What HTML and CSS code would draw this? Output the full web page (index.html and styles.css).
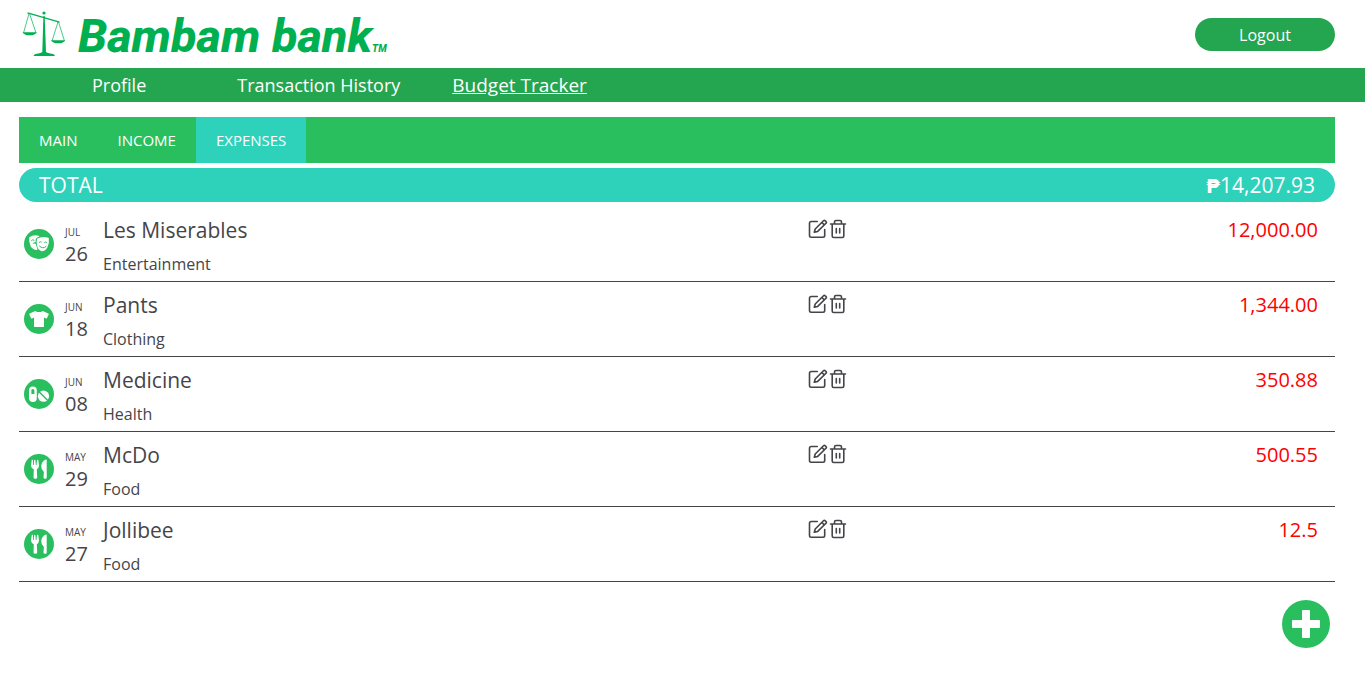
FILE: index.html
```html
<!DOCTYPE html>
<html lang="en">
<head>
<meta charset="utf-8">
<meta name="viewport" content="width=device-width, initial-scale=1">
<title>Bambam bank - Budget Tracker</title>
<link rel="stylesheet" href="styles.css">
</head>
<body>
<svg class="sprite" aria-hidden="true">
  <symbol id="masks" viewBox="0 0 30 30">
    <path fill="#fff" d="M5.2 8.2Q9.500 5.600 14.500 6.700L15.600 7.500Q12.800 8.300 11.700 9.900L11.600 13Q9.500 13.200 8.700 15Q10 14.300 11.600 14.700L13.200 19.300Q14 20.800 13 21Q8.300 20.800 6.300 16.500Q4.700 12.500 5.200 8.200Z"/>
    <path fill="#fff" d="M13 9.700Q18.500 6.700 24.800 9Q25.500 14 23.500 18.200Q21.300 22.400 17.900 22.300Q14.300 21.200 13 16.700Q12.200 13 13 9.700Z"/>
    <path fill="none" stroke="#29bf5f" stroke-width="1" stroke-linecap="round" d="M7.500 11.500Q8.500 10.100 10 11.100M15.300 13.300Q16.200 12 17.300 13M20.500 13.500Q21.600 12.200 22.600 13.500M15.500 17Q18.700 20.500 22 17.500"/>
  </symbol>
  <symbol id="shirt" viewBox="0 0 30 30">
    <path fill="#fff" d="M11.300 6.900Q15 9.300 18.700 6.900L24.300 9.500Q25 10 24.700 10.600L22.900 14.200Q22.500 14.800 21.800 14.400L20 13.600V22.200Q20 23 19.200 23H10.800Q10 23 10 22.200V13.600L8.200 14.400Q7.500 14.800 7.100 14.200L5.300 10.600Q5 10 5.700 9.500Z"/>
  </symbol>
  <symbol id="pills" viewBox="0 0 30 30">
    <rect x="5" y="7.500" width="7.800" height="15.500" rx="3.900" fill="#fff"/>
    <path fill="#29bf5f" d="M7.400 15v-3.600a1.500 1.500 0 0 1 3 0V15Z"/>
    <circle cx="19.500" cy="17.200" r="5.600" fill="#fff"/>
    <path stroke="#29bf5f" stroke-width="1.400" d="M15 12.700l9 9"/>
  </symbol>
  <symbol id="food" viewBox="0 0 30 30">
    <path fill="#fff" d="M7.800 5.800Q8.600 5.400 9 6V11H9.700L10.200 6Q10.800 5.300 11.400 6L11.800 11H12.500L13 6Q13.700 5.400 14.300 6L15 11.500Q15 14 12.800 15.200L13.200 23.500Q13 24.700 11.500 24.700Q9.500 24.700 9.500 23.500L9.800 15.200Q7 14 7 11.500Z"/>
    <path fill="#fff" d="M22.700 6V23.700Q22.700 24.700 21.300 24.700Q19.400 24.700 19.500 23.500L19.900 18Q17 15.500 17.200 12Q17.800 7.300 21.800 5.500Q22.700 5.300 22.700 6Z"/>
  </symbol>
  <symbol id="edit" viewBox="0 0 20 20">
    <path fill="none" stroke="currentColor" stroke-width="1.600" stroke-linecap="round" stroke-linejoin="round" d="M9.300 2.500H3.200Q1.500 2.500 1.500 4.200V16.500Q1.500 18.200 3.200 18.200H15Q16.700 18.200 16.700 16.500V10.500M15.500 1.800Q16.300 1 17.200 1.800L18 2.600Q18.800 3.500 18 4.300L9.700 12.400L6.300 13.300L7.200 10ZM13.900 3.500L16.300 5.900"/>
  </symbol>
  <symbol id="trash" viewBox="0 0 20 20">
    <path fill="none" stroke="currentColor" stroke-width="1.600" stroke-linecap="round" stroke-linejoin="round" d="M2.500 5H17.500M4.200 5V17Q4.200 18.500 5.700 18.500H14.300Q15.800 18.500 15.800 17V5M6.500 4.800V3Q6.500 1.500 8 1.500H12Q13.500 1.500 13.500 3V4.800M8.300 9.500V14M11.700 9.500V14"/>
  </symbol>
</svg>

<header class="header">
  <a class="brand" href="#" aria-label="Bambam bank home">
    <svg class="brand-mark" viewBox="0 0 44 46" aria-hidden="true">
      <g fill="none" stroke="#00b050" stroke-width="0.700">
        <path d="M7 2.500L1.500 22M7.500 2.500L14 22M36 11L30 30M36.500 11L42.500 30"/>
        <path stroke-width="1.400" d="M5.500 1.800L37.500 11.200"/>
      </g>
      <g fill="#00b050">
        <circle cx="22" cy="2" r="1.600"/>
        <path d="M0.500 21.200H14.800Q13.500 24.300 7.600 24.300Q2 24.300 0.500 21.200ZM29 29.200H43.300Q42 32.300 36 32.300Q30.500 32.300 29 29.200Z"/>
        <path d="M21.400 5H22.700L24 41Q25 42 31 43Q32.500 43.300 33 45H11.500Q12 43.300 13.500 43Q19.500 42 20.300 41Z"/>
      </g>
    </svg>
    <span class="brand-name">Bambam bank</span><span class="brand-tm">TM</span>
  </a>
  <button class="logout" type="button">Logout</button>
</header>

<nav class="nav" aria-label="Main">
  <a href="#">Profile</a>
  <a href="#">Transaction History</a>
  <a class="active" href="#" aria-current="page">Budget Tracker</a>
</nav>

<main class="main">
  <nav class="tabs" aria-label="Budget">
    <a href="#">MAIN</a>
    <a href="#">INCOME</a>
    <a class="selected" href="#" aria-current="page">EXPENSES</a>
  </nav>
  <div class="total"><span>TOTAL</span><span><b class="peso">₱</b>14,207.93</span></div>

  <ul class="expenses">
    <li class="expense">
      <svg class="category-icon"><use href="#masks"/></svg>
      <time class="date" datetime="07-26"><span class="month">JUL</span><span class="day">26</span></time>
      <div class="details"><h2>Les Miserables</h2><p>Entertainment</p></div>
      <div class="actions"><button type="button" aria-label="Edit Les Miserables"><svg><use href="#edit"/></svg></button><button type="button" aria-label="Delete Les Miserables"><svg><use href="#trash"/></svg></button></div>
      <span class="amount">12,000.00</span>
    </li>
    <li class="expense">
      <svg class="category-icon"><use href="#shirt"/></svg>
      <time class="date" datetime="06-18"><span class="month">JUN</span><span class="day">18</span></time>
      <div class="details"><h2>Pants</h2><p>Clothing</p></div>
      <div class="actions"><button type="button" aria-label="Edit Pants"><svg><use href="#edit"/></svg></button><button type="button" aria-label="Delete Pants"><svg><use href="#trash"/></svg></button></div>
      <span class="amount">1,344.00</span>
    </li>
    <li class="expense">
      <svg class="category-icon"><use href="#pills"/></svg>
      <time class="date" datetime="06-08"><span class="month">JUN</span><span class="day">08</span></time>
      <div class="details"><h2>Medicine</h2><p>Health</p></div>
      <div class="actions"><button type="button" aria-label="Edit Medicine"><svg><use href="#edit"/></svg></button><button type="button" aria-label="Delete Medicine"><svg><use href="#trash"/></svg></button></div>
      <span class="amount">350.88</span>
    </li>
    <li class="expense">
      <svg class="category-icon"><use href="#food"/></svg>
      <time class="date" datetime="05-29"><span class="month">MAY</span><span class="day">29</span></time>
      <div class="details"><h2>McDo</h2><p>Food</p></div>
      <div class="actions"><button type="button" aria-label="Edit McDo"><svg><use href="#edit"/></svg></button><button type="button" aria-label="Delete McDo"><svg><use href="#trash"/></svg></button></div>
      <span class="amount">500.55</span>
    </li>
    <li class="expense">
      <svg class="category-icon"><use href="#food"/></svg>
      <time class="date" datetime="05-27"><span class="month">MAY</span><span class="day">27</span></time>
      <div class="details"><h2>Jollibee</h2><p>Food</p></div>
      <div class="actions"><button type="button" aria-label="Edit Jollibee"><svg><use href="#edit"/></svg></button><button type="button" aria-label="Delete Jollibee"><svg><use href="#trash"/></svg></button></div>
      <span class="amount">12.5</span>
    </li>
  </ul>
  <button class="add" type="button" aria-label="Add expense">
    <svg viewBox="0 0 48 48" aria-hidden="true"><path fill="#fff" d="M21 10h6q1 0 1 1v9h9q1 0 1 1v6q0 1-1 1h-9v9q0 1-1 1h-6q-1 0-1-1v-9h-9q-1 0-1-1v-6q0-1 1-1h9v-9q0-1 1-1Z"/></svg>
  </button>
</main>
</body>
</html>
```
FILE: styles.css
```css
* {
  box-sizing: border-box;
}

body {
  margin: 0;
  background: #fff;
  color: #454549;
  font-family: "Open Sans", "Noto Sans", sans-serif;
  font-size: 16px;
}

a {
  color: inherit;
  text-decoration: none;
}

button {
  padding: 0;
  border: 0;
  background: none;
  color: inherit;
  font: inherit;
  cursor: pointer;
}

.sprite {
  position: absolute;
  width: 0;
  height: 0;
}

.header {
  display: flex;
  align-items: center;
  justify-content: space-between;
  height: 68px;
  padding: 0 30px 0 22px;
}

.brand {
  display: flex;
  align-items: baseline;
  color: #00b050;
  font-family: Roboto, sans-serif;
  font-style: italic;
  font-weight: 800;
}

.brand-mark {
  align-self: center;
  width: 44px;
  height: 46px;
  margin-right: 12px;
}

.brand-name {
  padding-top: 4px;
  font-size: 47px;
  line-height: 64px;
}

.brand-tm {
  font-size: 10px;
}

.logout {
  width: 140px;
  height: 33px;
  padding-top: 1px;
  border-radius: 17px;
  background: #24a550;
  color: #fff;
}

.nav {
  display: flex;
  align-items: center;
  height: 34px;
  padding-left: 92px;
  background: #24a550;
  color: #fff;
  font-size: 18px;
}

.nav a:nth-child(2) {
  margin: 0 52px 0 91px;
}

.nav .active {
  font-size: 19px;
  text-decoration: underline;
}

.main {
  display: flex;
  flex-direction: column;
  padding: 15px 30px 0 19px;
}

.tabs {
  display: flex;
  height: 46px;
  background: #29bf5f;
  color: #fff;
  font-size: 15px;
  line-height: 46px;
}

.tabs a {
  padding: 0 20px;
}

.tabs .selected {
  background: #2ed1b9;
}

.total {
  display: flex;
  justify-content: space-between;
  height: 34px;
  margin: 5px 0;
  padding: 0 20px;
  border-radius: 17px;
  background: #2ed1b9;
  color: #fff;
  font-size: 21px;
  line-height: 34px;
}

.peso {
  font-family: "DejaVu Sans", sans-serif;
  font-size: 20px;
  font-weight: 700;
  line-height: 20px;
}

.expenses {
  margin: 0;
  padding: 0;
  list-style: none;
}

.expense {
  display: grid;
  grid-template-columns: 30px 24px 14fr 40px 9fr;
  height: 75px;
  padding: 0 17px 0 5px;
  border-bottom: 1px solid #454549;
}

.category-icon {
  align-self: center;
  width: 30px;
  height: 30px;
  border-radius: 50%;
  background: #29bf5f;
}

.date {
  display: flex;
  flex-direction: column;
  padding: 18px 0 0 11px;
}

.month {
  font-size: 10px;
  line-height: 14px;
}

.day {
  font-size: 20px;
  line-height: 30px;
}

.details {
  padding: 8px 0 0 25px;
}

.details h2 {
  margin: 0;
  font-size: 21px;
  font-weight: 400;
  line-height: 30px;
}

.details p {
  margin: 8px 0 0;
  line-height: 22px;
}

.actions {
  display: flex;
  padding-top: 12px;
}

.actions button,
.actions svg {
  display: block;
  width: 20px;
  height: 20px;
}

.amount {
  padding-top: 8px;
  color: #f00;
  font-size: 20px;
  line-height: 30px;
  text-align: right;
}

.add {
  align-self: flex-end;
  width: 48px;
  height: 48px;
  margin: 18px 5px 0 0;
  border-radius: 50%;
  background: #29bf5f;
}

.add svg {
  display: block;
}
```
